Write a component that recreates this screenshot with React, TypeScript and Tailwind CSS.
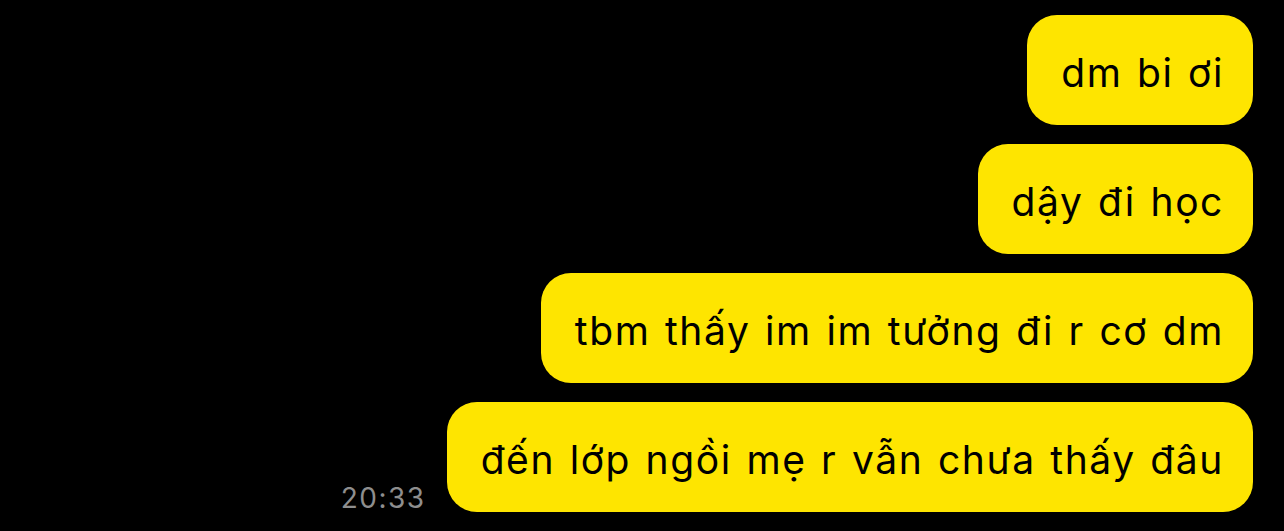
export default function App() {
  const messages = [
    "dm bi ơi",
    "dậy đi học",
    "tbm thấy im im tưởng đi r cơ dm",
    "đến lớp ngồi mẹ r vẫn chưa thấy đâu",
  ];

  return (
    <div className="w-[1284px] h-[531px] bg-black overflow-hidden font-['Inter','Noto_Sans',sans-serif]">
      <div className="flex flex-col items-end gap-[19px] pt-[15px] pr-[31px]">
        {messages.map((text, idx) => (
          <div key={idx} className="flex items-end gap-[21px]">
            {idx === messages.length - 1 && (
              <span className="text-[28px] leading-none tracking-[1.5px] text-[#8e8e8e]">20:33</span>
            )}
            <div className="h-[110px] flex items-center pt-[7px] pl-[34px] pr-[29px] rounded-[30px] bg-[#fee500] text-black text-[39px] tracking-[1.6px] [word-spacing:2px]">
              {text}
            </div>
          </div>
        ))}
      </div>
    </div>
  );
}
